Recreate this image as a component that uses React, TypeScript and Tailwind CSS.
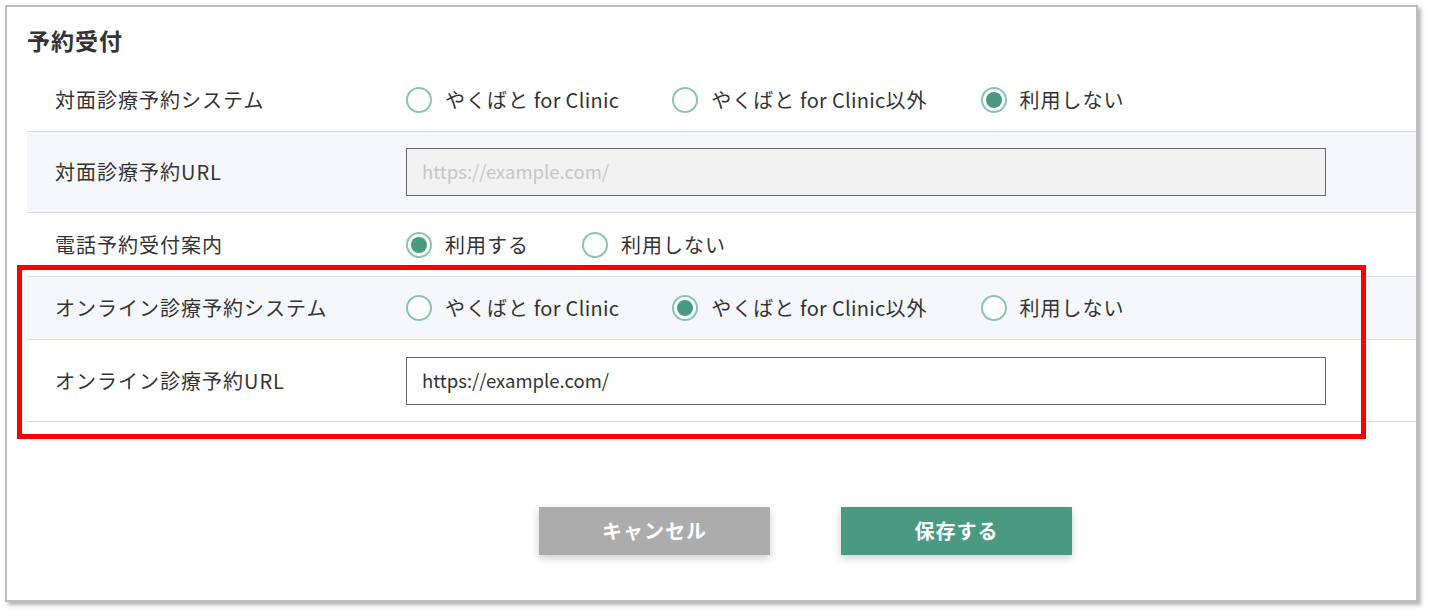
import React from 'react';

type Option = { label: string; checked?: boolean };

// latin runs are set a touch tighter than the kana around them
function Mixed({ text }: { text: string }) {
  const parts = text.split(/( ?[A-Za-z][A-Za-z ]*)/).filter(Boolean);
  return (
    <>
      {parts.map((p, i) =>
        /[A-Za-z]/.test(p) ? (
          <span key={i} className="tracking-[0.3px]">
            {p}
          </span>
        ) : (
          <span key={i}>{p}</span>
        ),
      )}
    </>
  );
}

function Radio({ label, checked }: Option) {
  return (
    <label className="flex items-center gap-[13px]">
      <span className="flex h-[26px] w-[26px] items-center justify-center rounded-full border-2 border-[#86c6b0] bg-white">
        {checked && <span className="h-[16px] w-[16px] rounded-full bg-[#4a9a82]" />}
      </span>
      <span className="text-[20px] leading-none tracking-[1px] text-[#333]">
        <Mixed text={label} />
      </span>
    </label>
  );
}

function Row({
  label,
  shaded,
  height,
  children,
}: {
  label: string;
  shaded?: boolean;
  height: string;
  children: React.ReactNode;
}) {
  return (
    <div className={`flex items-center border-b border-[#dcdcdc] ${height} ${shaded ? 'bg-[#f5f7fa]' : 'bg-white'}`}>
      <div className="w-[379px] shrink-0 pl-[28px] text-[20px] leading-none tracking-[1px] text-[#333]">{label}</div>
      {children}
    </div>
  );
}

function RadioGroup({ options }: { options: Option[] }) {
  return (
    <div className="flex items-center gap-[53px]">
      {options.map((o) => (
        <Radio key={o.label} {...o} />
      ))}
    </div>
  );
}

export default function App() {
  return (
    <div className="h-[616px] w-[1430px] bg-white pl-[5px] pt-[5px] font-['Noto_Sans_CJK_JP',sans-serif]">
      <div className="relative h-[597px] w-[1413px] border-2 border-[#bdbdbd] bg-white shadow-[3px_3px_4px_rgba(0,0,0,0.3)]">
        <h1 className="mb-[13px] pl-[20px] pt-[17px] text-[23px] font-bold leading-[32px] tracking-[1px] text-[#333]">予約受付</h1>

        <div className="ml-[20px]">
          <Row label="対面診療予約システム" height="h-[63px]">
            <RadioGroup
              options={[
                { label: 'やくばと for Clinic' },
                { label: 'やくばと for Clinic以外' },
                { label: '利用しない', checked: true },
              ]}
            />
          </Row>
          <Row label="対面診療予約URL" shaded height="h-[81px]">
            <div className="flex h-[48px] w-[920px] items-center border border-[#666] bg-[#f2f2f2] pl-[15px] text-[18.5px] text-[#c6c6c6]">
              https://example.com/
            </div>
          </Row>
          <Row label="電話予約受付案内" height="h-[64px]">
            <RadioGroup options={[{ label: '利用する', checked: true }, { label: '利用しない' }]} />
          </Row>
          <Row label="オンライン診療予約システム" shaded height="h-[63px]">
            <RadioGroup
              options={[
                { label: 'やくばと for Clinic' },
                { label: 'やくばと for Clinic以外', checked: true },
                { label: '利用しない' },
              ]}
            />
          </Row>
          <Row label="オンライン診療予約URL" height="h-[82px]">
            <div className="flex h-[48px] w-[920px] items-center border border-[#666] bg-white pl-[15px] text-[18.5px] text-[#333]">
              https://example.com/
            </div>
          </Row>

          <div className="mt-[85px] flex gap-[71px] pl-[512px]">
            <button className="h-[48px] w-[231px] bg-[#acacac] text-[20px] font-bold tracking-[1px] text-white shadow-[0_3px_8px_rgba(0,0,0,0.2)]">
              キャンセル
            </button>
            <button className="h-[48px] w-[231px] bg-[#4a9a82] text-[20px] font-bold tracking-[1px] text-white shadow-[0_3px_8px_rgba(0,0,0,0.2)]">
              保存する
            </button>
          </div>
        </div>

        {/* annotation box */}
        <div className="pointer-events-none absolute left-[10px] top-[258px] h-[174px] w-[1349px] border-[5px] border-[#ff0000]" />
      </div>
    </div>
  );
}
